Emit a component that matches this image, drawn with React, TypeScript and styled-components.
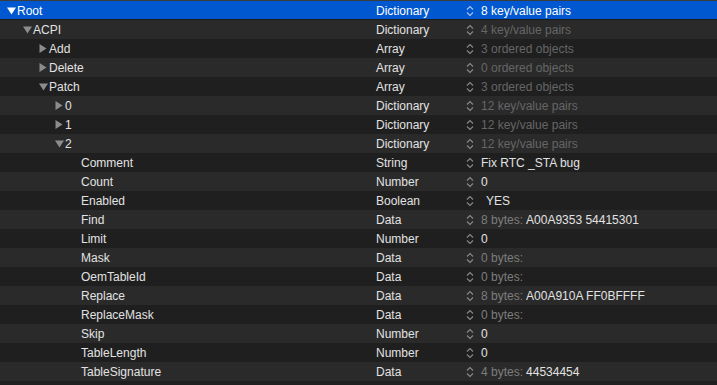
import styled, { createGlobalStyle } from "styled-components";

interface PlistRow {
  key: string;
  depth: number;
  open?: boolean;
  type: string;
  value: string;
  muted?: string;
  dim?: boolean;
  popup?: boolean;
}

const rows: PlistRow[] = [
  { key: "Root", depth: 0, open: true, type: "Dictionary", value: "8 key/value pairs" },
  { key: "ACPI", depth: 1, open: true, type: "Dictionary", value: "4 key/value pairs", dim: true },
  { key: "Add", depth: 2, open: false, type: "Array", value: "3 ordered objects", dim: true },
  { key: "Delete", depth: 2, open: false, type: "Array", value: "0 ordered objects", dim: true },
  { key: "Patch", depth: 2, open: true, type: "Array", value: "3 ordered objects", dim: true },
  { key: "0", depth: 3, open: false, type: "Dictionary", value: "12 key/value pairs", dim: true },
  { key: "1", depth: 3, open: false, type: "Dictionary", value: "12 key/value pairs", dim: true },
  { key: "2", depth: 3, open: true, type: "Dictionary", value: "12 key/value pairs", dim: true },
  { key: "Comment", depth: 4, type: "String", value: "Fix RTC _STA bug" },
  { key: "Count", depth: 4, type: "Number", value: "0" },
  { key: "Enabled", depth: 4, type: "Boolean", value: "YES", popup: true },
  { key: "Find", depth: 4, type: "Data", muted: "8 bytes:", value: "A00A9353 54415301" },
  { key: "Limit", depth: 4, type: "Number", value: "0" },
  { key: "Mask", depth: 4, type: "Data", muted: "0 bytes:", value: "" },
  { key: "OemTableId", depth: 4, type: "Data", muted: "0 bytes:", value: "" },
  { key: "Replace", depth: 4, type: "Data", muted: "8 bytes:", value: "A00A910A FF0BFFFF" },
  { key: "ReplaceMask", depth: 4, type: "Data", muted: "0 bytes:", value: "" },
  { key: "Skip", depth: 4, type: "Number", value: "0" },
  { key: "TableLength", depth: 4, type: "Number", value: "0" },
  { key: "TableSignature", depth: 4, type: "Data", muted: "4 bytes:", value: "44534454" },
];

const GlobalStyle = createGlobalStyle`
  body {
    margin: 0;
    background: #1e1e1e;
    font-family: "Liberation Sans", Arial, sans-serif;
    -webkit-font-smoothing: antialiased;
  }
`;

function Disclosure({ open, selected }: { open?: boolean; selected: boolean }) {
  const fill = selected ? "#ffffff" : "#8c8c8c";
  return (
    <Toggle>
      {open === undefined ? null : open ? (
        <svg width="9" height="8" viewBox="0 0 9 8">
          <path d="M0 0.5 L9 0.5 L4.5 7.5 Z" fill={fill} />
        </svg>
      ) : (
        <svg width="8" height="9" viewBox="0 0 8 9">
          <path d="M0.5 0 L7.5 4.5 L0.5 9 Z" fill={fill} />
        </svg>
      )}
    </Toggle>
  );
}

function Stepper({ selected }: { selected: boolean }) {
  const stroke = selected ? "#a9c4ec" : "#8a8a8a";
  return (
    <StepperIcon width="8" height="12" viewBox="0 0 8 12">
      <path d="M1 4.5 L4 1.5 L7 4.5 M1 7.5 L4 10.5 L7 7.5" fill="none" stroke={stroke} strokeWidth="1.1" />
    </StepperIcon>
  );
}

export default function App() {
  return (
    <Outline>
      <GlobalStyle />
      {rows.map((row, i) => {
        const selected = i === 0;
        return (
          <Row key={i} $selected={selected} $alt={i % 2 === 1}>
            <KeyCell $depth={row.depth}>
              <Disclosure open={row.open} selected={selected} />
              <span>{row.key}</span>
            </KeyCell>
            <TypeCell>{row.type}</TypeCell>
            <ValueCell>
              <Stepper selected={selected} />
              {row.muted && <Muted>{row.muted}</Muted>}
              <Value $dim={row.dim} $popup={row.popup}>
                {row.value}
              </Value>
            </ValueCell>
          </Row>
        );
      })}
      <Row $selected={false} $alt={false} />
    </Outline>
  );
}

const Outline = styled.div`
  width: 717px;
  height: 385px;
  overflow: hidden;
  border-top: 1px solid #3c3c3c;
  box-sizing: border-box;
  background: #1e1e1e;
`;

const Row = styled.div<{ $selected: boolean; $alt: boolean }>`
  display: grid;
  grid-template-columns: 376px 90px 1fr;
  align-items: center;
  height: 19px;
  box-sizing: border-box;
  font-size: 12px;
  color: #e2e2e2;
  background: ${(p) => (p.$selected ? "#0058d0" : p.$alt ? "#2a2a2a" : "#1f1f1f")};
  border-bottom: ${(p) => (p.$selected ? "1px solid #1c1c1c" : "none")};
  ${(p) => p.$selected && "color: #ffffff;"}
`;

const KeyCell = styled.div<{ $depth: number }>`
  display: flex;
  align-items: center;
  padding-left: ${(p) => 7 + p.$depth * 16}px;
  white-space: nowrap;
`;

const Toggle = styled.span`
  display: inline-flex;
  align-items: center;
  width: 10px;
  height: 19px;
  flex-shrink: 0;
`;

const TypeCell = styled.div`
  white-space: nowrap;
`;

const ValueCell = styled.div`
  display: flex;
  align-items: center;
  white-space: nowrap;
`;

const StepperIcon = styled.svg`
  margin-right: 7px;
  flex-shrink: 0;
`;

const Muted = styled.span`
  color: #7d7d7d;
  margin-right: 3px;
`;

const Value = styled.span<{ $dim?: boolean; $popup?: boolean }>`
  color: ${(p) => (p.$dim ? "#666666" : "inherit")};
  padding-left: ${(p) => (p.$popup ? "5px" : "0")};
`;
